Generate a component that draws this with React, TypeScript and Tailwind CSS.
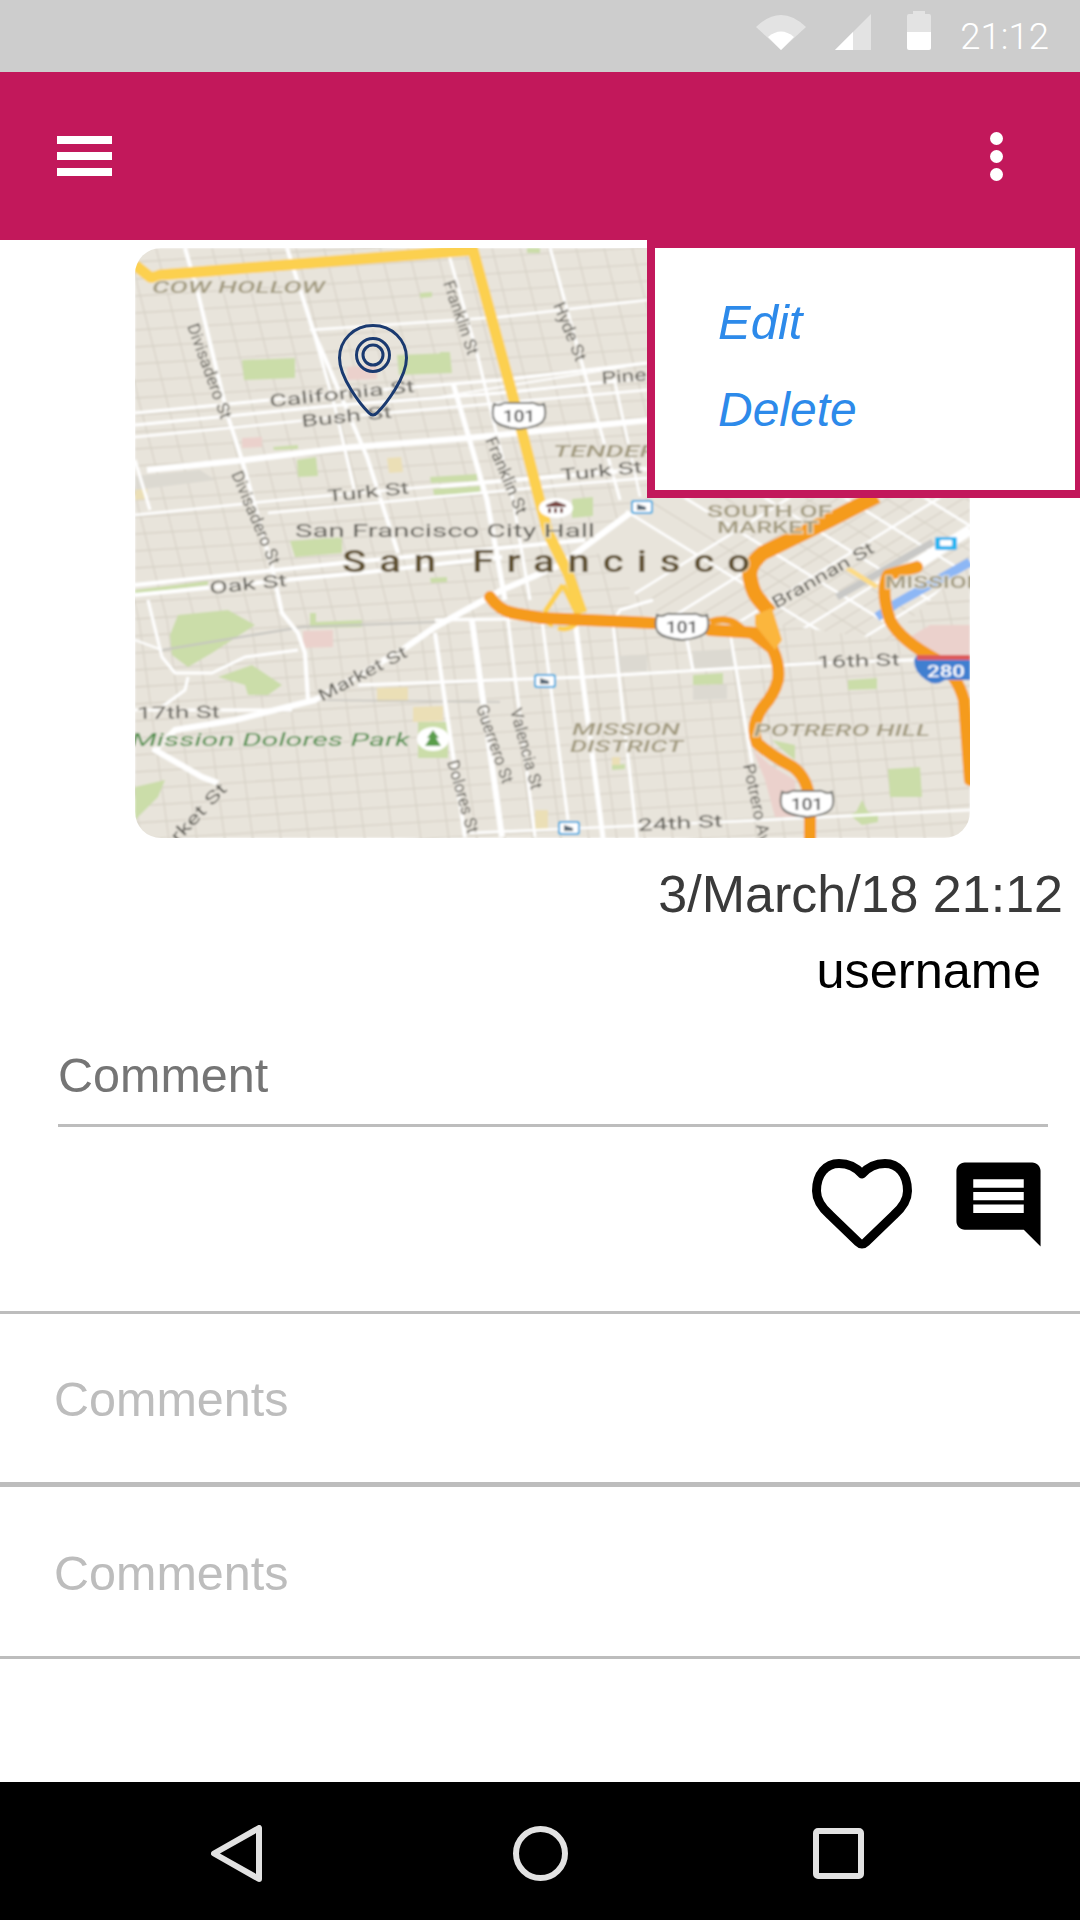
import React from "react";

const W = (pts: string, w: number, c = "#ffffff") => ({ pts, w, c });

const streets = [
  W("287,248 313,330 367,457 398,553", 4),
  W("313,330 335,407 355,493", 3),
  W("185,248 197,290 228,417 242,460 272,567 282,613 298,633 305,653 308,700", 4),
  W("135,413 340,393 500,380 647,363", 3),
  W("135,425 340,405 500,393 647,378", 3),
  W("135,437 340,417 500,403 647,390", 2.5),
  W("310,330 500,317 647,300", 2.5),
  W("147,470 245,460 342,448 468,438 518,433 650,420", 6),
  W("135,515 300,498 585,473 647,468", 2.5),
  W("268,513 585,483 647,478", 2.5),
  W("135,585 342,563 585,540", 4),
  W("135,595 368,572 502,557", 4),
  W("135,460 150,510", 3),
  W("135,640 162,650", 2),
  W("148,600 162,657 175,673 212,673 245,657 298,650", 3),
  W("188,677 185,690 162,707", 3),
  W("135,710 292,710", 3),
  W("358,685 585,677 817,663 913,660 970,657", 3),
  W("468,833 585,828 763,820 970,810", 2.5),
  W("435,620 585,618 700,618", 3),
  W("435,633 465,837", 4),
  W("472,620 502,837", 6),
  W("508,620 535,837", 3),
  W("542,620 568,820", 3),
  W("575,620 603,838", 5),
  W("613,623 637,838", 3),
  W("653,600 620,610 613,623", 3),
  W("687,640 693,670", 3),
  W("730,633 752,763", 3),
  W("447,248 477,353 490,407 513,500 530,600", 3),
  W("453,383 487,500 505,600", 5),
  W("550,248 620,500", 3),
  W("613,373 640,497", 2.5),
  W("440,397 647,363", 2),
  W("440,440 647,420", 3),
  W("440,487 647,470", 2),
  W("630,513 560,565 502,590 435,627 402,650 315,700 235,720 175,730 155,750 202,777 218,783", 6),
  W("970,530 920,563", 10),
];

const somaMajorA = [0, 75, 150, 225, 300, 375];
const somaMajorB = [0, 80, 160, 240, 320, 400];
const somaMinorA = [25, 50, 100, 125, 175, 200, 250, 275, 325, 350];
const somaMinorB = [40, 120, 200, 280, 360];

const hLines: number[] = [];
for (let y = 250; y < 900; y += 17) hLines.push(y);
const vLines: number[] = [];
for (let x = -40; x < 1000; x += 28) vLines.push(x);

const parks: string[] = [
  "242,360 295,358 295,378 244,380",
  "397,355 450,353 452,373 399,375",
  "420,293 432,292 432,297 420,298",
  "297,460 316,457 318,476 298,477",
  "430,477 477,474 477,481 431,483",
  "433,489 480,486 480,493 434,495",
  "290,541 342,537 342,553 295,557",
  "273,447 298,445 298,449 274,450",
  "572,499 593,497 593,516 572,518",
  "178,615 228,610 255,625 212,653 188,667 172,655 170,635",
  "218,677 252,665 282,685 268,695 248,695 245,685",
  "135,787 165,780 158,797 138,817 135,820",
  "310,613 316,613 316,622 362,620 362,627 310,628",
  "430,578 447,577 447,582 431,583",
  "418,722 448,722 448,758 418,758",
  "693,675 723,673 723,684 693,685",
  "848,680 877,678 877,689 848,690",
  "888,769 920,767 922,797 890,797",
  "856,812 862,800 868,812 878,815 878,822 862,825 850,815",
  "612,765 625,764 625,769 612,770",
  "772,740 795,745 795,760 785,752",
  "440,352 450,352 450,372 440,372",
  "527,248 540,248 540,253 527,253",
  "135,590 208,581 208,585 135,594",
];
const pinks: string[] = [
  "242,438 262,437 262,447 242,448",
  "168,473 198,472 198,477 168,477",
  "303,631 333,630 333,647 303,648",
  "753,750 770,765 795,780 797,817 775,817 765,780",
  "347,367 377,365 377,379 347,380",
  "905,640 930,625 970,625 970,655 940,655",
];
const tans: string[] = [
  "387,458 401,457 403,472 389,473",
  "377,688 408,687 408,701 377,702",
  "413,707 443,706 443,721 413,722",
  "135,488 147,487 147,499 135,500",
  "612,757 620,757 620,765 612,765",
  "535,810 548,810 548,830 535,830",
];
const grays: string[] = [
  "618,656 647,655 647,671 618,672",
  "693,651 733,650 733,667 693,668",
  "693,686 727,685 727,699 693,700",
  "135,476 200,470 215,480 135,490",
];

function Lbl(p: { x: number; y: number; w: number; s: number; t: string; r?: number; c?: string; i?: boolean; b?: boolean; ls?: number }) {
  return (
    <text
      x={p.x}
      y={p.y}
      textLength={p.w}
      lengthAdjust="spacingAndGlyphs"
      letterSpacing={p.ls}
      transform={p.r ? `rotate(${p.r} ${p.x} ${p.y})` : undefined}
      fontFamily="Roboto, 'Liberation Sans', sans-serif"
      fontSize={p.s}
      fontStyle={p.i ? "italic" : "normal"}
      fontWeight={p.b ? 500 : 400}
      fill={p.c ?? "#5f5d56"}
      stroke="#e8e4db"
      strokeOpacity={0.7}
      strokeWidth={2.5}
      paintOrder="stroke"
    >
      {p.t}
    </text>
  );
}

const NB = "#a39b80";

function Shield({ cx, cy }: { cx: number; cy: number }) {
  return (
    <g>
      <path
        d={`M${cx - 25} ${cy - 12} q4 2 8 0 q3 -2 6 -1 h22 q3 -1 6 1 q4 2 8 0 q3 12 -1 17 q-5 6 -24 8 q-19 -2 -24 -8 q-4 -5 -1 -17z`}
        fill="#ffffff"
        stroke="#6f6f6b"
        strokeWidth={2}
      />
      <text x={cx} y={cy + 6} textAnchor="middle" textLength={32} lengthAdjust="spacingAndGlyphs" fontFamily="Roboto, sans-serif" fontWeight={500} fontSize={17} fill="#3c3c3c">
        101
      </text>
    </g>
  );
}

function Transit({ x, y }: { x: number; y: number }) {
  return (
    <g>
      <rect x={x} y={y} width={20} height={12} rx={2} fill="#ffffff" stroke="#29a8e0" strokeWidth={2} />
      <path d={`M${x + 5} ${y + 3} l9 3 v3 h-9z`} fill="#5a6a78" />
    </g>
  );
}

function MapArt() {
  return (
    <svg viewBox="135 248 835 590" width={835} height={590} className="block">
      <defs>
        <filter id="mb" x="-2%" y="-2%" width="104%" height="104%">
          <feGaussianBlur stdDeviation="0.8" />
        </filter>
        <clipPath id="soma">
          <polygon points="590,545 640,498 970,498 970,560 890,640 760,622 690,618 650,610" />
        </clipPath>
      </defs>
      <g filter="url(#mb)">
        <rect x={135} y={248} width={835} height={590} fill="#e8e4db" />
        <g stroke="#d8d3c8" strokeWidth={1.3} fill="none">
          {hLines.map((y) => (
            <line key={y} x1={135} y1={y + 12} x2={970} y2={y - 40} />
          ))}
          {vLines.map((x) => (
            <polyline key={x} points={`${x},248 ${x + 95},620 ${x + 125},840`} />
          ))}
        </g>
        <polygon points="590,545 640,498 970,498 970,560 890,640 760,622 690,618 650,610" fill="#e8e4db" />
        <g clipPath="url(#soma)" fill="none">
          {somaMinorA.map((o) => (
            <line key={o} x1={560 + o} y1={640} x2={860 + o} y2={454} stroke="#d8d3c8" strokeWidth={1.3} />
          ))}
          {somaMinorB.map((o) => (
            <line key={o} x1={560 + o} y1={470} x2={860 + o} y2={656} stroke="#d8d3c8" strokeWidth={1.3} />
          ))}
          {somaMajorA.map((o) => (
            <line key={o} x1={560 + o} y1={640} x2={860 + o} y2={454} stroke="#ffffff" strokeWidth={2.5} />
          ))}
          {somaMajorB.map((o) => (
            <line key={o} x1={560 + o} y1={470} x2={860 + o} y2={656} stroke="#ffffff" strokeWidth={2.5} />
          ))}
        </g>
        {parks.map((p) => (
          <polygon key={p} points={p} fill="#cbdda9" />
        ))}
        {pinks.map((p) => (
          <polygon key={p} points={p} fill="#ebd1cc" />
        ))}
        {tans.map((p) => (
          <polygon key={p} points={p} fill="#ebdfb6" />
        ))}
        {grays.map((p) => (
          <polygon key={p} points={p} fill="#dcd9d1" />
        ))}
        <polyline points="162,650 302,627 435,622" fill="none" stroke="#c6c5c0" strokeWidth={2} />
        <polyline points="315,700 500,702" fill="none" stroke="#c6c5c0" strokeWidth={1.5} />
        <polyline points="933,542 837,597" fill="none" stroke="#c8c8c6" strokeWidth={7} />
        <polyline points="970,562 897,603 877,617" fill="none" stroke="#8db7f5" strokeWidth={9} />
        {streets.map((s) => (
          <polyline key={s.pts} points={s.pts} fill="none" stroke={s.c} strokeWidth={s.w} strokeLinejoin="round" />
        ))}
        <path d="M135 265 L150 277 Q155 278 160 275 L473 250 L513 397 L548 533 L568 573 L582 613" fill="none" stroke="#fcd04f" strokeWidth={11} strokeLinejoin="round" />
        <path d="M563 585 L546 610 Q543 622 553 625 M563 585 L580 620 Q570 632 558 628" fill="none" stroke="#fcd04f" strokeWidth={5} />
        <polyline points="847,568 877,587" fill="none" stroke="#fddb85" strokeWidth={5} />
        <path d="M490 597 Q500 612 518 614 L542 618 L653 623 M710 630 L757 633 Q770 640 773 650 Q780 665 778 680 Q774 695 763 707 Q750 725 757 743 Q770 755 793 767 Q808 778 810 803 L810 838" fill="none" stroke="#f59b1f" strokeWidth={12} strokeLinecap="round" strokeLinejoin="round" />
        <path d="M710 622 Q725 617 735 623 L770 650" fill="none" stroke="#f59b1f" strokeWidth={7} />
        <path d="M877 496 L830 520 L763 553 Q748 565 750 577 Q752 590 757 597 L770 613" fill="none" stroke="#f59b1f" strokeWidth={15} strokeLinejoin="round" />
        <polygon points="755,615 772,608 782,640 775,650 755,625" fill="#fbb63e" />
        <path d="M917 567 L888 575 Q880 590 890 620 Q900 640 937 660 Q957 675 964 700 L970 780" fill="none" stroke="#f59b1f" strokeWidth={12} strokeLinecap="round" strokeLinejoin="round" />
        <path d="M914 660 L917 655 H970 V680 H945 Q935 687 926 680 Q914 672 914 660z" fill="#3f7fd0" />
        <rect x={917} y={655} width={53} height={5} fill="#dd5a5a" />
        <text x={927} y={677} textLength={38} lengthAdjust="spacingAndGlyphs" fontFamily="Roboto, sans-serif" fontWeight={500} fontSize={17} fill="#ffffff">280</text>
        <Shield cx={519} cy={416} />
        <Shield cx={682} cy={627} />
        <Shield cx={807} cy={804} />
        <Transit x={632} y={501} />
        <Transit x={535} y={675} />
        <Transit x={559} y={822} />
        <rect x={935} y={537} width={22} height={13} rx={2} fill="#29b6f0" />
        <rect x={940} y={540} width={12} height={6} rx={1} fill="#ffffff" />
        <ellipse cx={556} cy={508} rx={17} ry={10} fill="#ffffff" />
        <path d="M546 505 L556 501 L566 505 V507 H546z M548 508 h3 v5 h-3z M554 508 h3 v5 h-3z M560 508 h3 v5 h-3z" fill="#7a4a44" />
        <ellipse cx={433} cy={739} rx={16} ry={12} fill="#ffffff" />
        <path d="M433 730 L439 738 H436 L441 746 H425 L430 738 H427z" fill="#5a9e4b" />

        <Lbl x={152} y={293} w={173} s={17} t="COW HOLLOW" i b c={NB} />
        <Lbl x={187} y={326} w={100} s={17} r={70} t="Divisadero St" />
        <Lbl x={443} y={283} w={77} s={17} r={71} t="Franklin St" />
        <Lbl x={270} y={407} w={146} s={17} r={-6} t="California St" />
        <Lbl x={302} y={427} w={91} s={17} r={-6} t="Bush St" />
        <Lbl x={553} y={305} w={62} s={17} r={68} t="Hyde St" />
        <Lbl x={602} y={384} w={72} s={17} r={-5} t="Pine St" />
        <Lbl x={485} y={440} w={82} s={17} r={67} t="Franklin St" />
        <Lbl x={553} y={457} w={165} s={17} i b t="TENDERLOIN" c={NB} />
        <Lbl x={561} y={481} w={82} s={17} r={-6} t="Turk St" />
        <Lbl x={328} y={502} w={82} s={17} r={-6} t="Turk St" />
        <Lbl x={295} y={537} w={300} s={18} t="San Francisco City Hall" />
        <Lbl x={342} y={572} w={421} s={31} b ls={10} t="San Francisco" c="#5f4f2f" />
        <Lbl x={210} y={594} w={78} s={17} r={-6} t="Oak St" />
        <Lbl x={231} y={474} w={100} s={17} r={67} t="Divisadero St" />
        <Lbl x={322} y={702} w={98} s={17} r={-28} t="Market St" />
        <Lbl x={137} y={719} w={83} s={17} r={-1} t="17th St" />
        <Lbl x={131} y={746} w={279} s={18} i t="Mission Dolores Park" c="#4d8f48" />
        <Lbl x={153} y={870} w={110} s={17} r={-47} t="Market St" />
        <Lbl x={476} y={707} w={82} s={17} r={71} t="Guerrero St" />
        <Lbl x={510} y={710} w={83} s={17} r={75} t="Valencia St" />
        <Lbl x={447} y={762} w={75} s={17} r={74} t="Dolores St" />
        <Lbl x={743} y={765} w={90} s={17} r={78} t="Potrero Ave" />
        <Lbl x={572} y={735} w={108} s={17} i b t="MISSION" c={NB} />
        <Lbl x={570} y={752} w={113} s={17} i b t="DISTRICT" c={NB} />
        <Lbl x={754} y={736} w={176} s={17} i b t="POTRERO HILL" c={NB} />
        <Lbl x={817} y={668} w={83} s={17} r={-2} t="16th St" />
        <Lbl x={638} y={831} w={85} s={17} r={-3} t="24th St" />
        <Lbl x={707} y={517} w={125} s={17} b t="SOUTH OF" c={NB} />
        <Lbl x={717} y={533} w={101} s={17} b t="MARKET" c={NB} />
        <Lbl x={776} y={609} w={115} s={17} r={-30} t="Brannan St" />
        <Lbl x={885} y={588} w={150} s={17} b t="MISSION BAY" c={NB} />
      </g>
      <path d="M373 325.5 C392 325.5 406.5 340 406.5 358 C406.5 378 385 405 377 413 Q373 417 369 413 C361 405 339.5 378 339.5 358 C339.5 340 354 325.5 373 325.5Z" fill="none" stroke="#1a3a70" strokeWidth={3} />
      <circle cx={373} cy={355} r={16.5} fill="none" stroke="#1a3a70" strokeWidth={3} />
      <circle cx={373} cy={355} r={10} fill="none" stroke="#1a3a70" strokeWidth={3} />
    </svg>
  );
}

export default function App() {
  return (
    <div className="relative flex h-[1920px] w-[1080px] flex-col overflow-hidden bg-white font-['Liberation_Sans',Arial,sans-serif]">
      {/* status bar */}
      <div className="flex h-[72px] shrink-0 items-end justify-end bg-[#cdcdcd] pb-[22px] pr-[31px]">
        <svg width={50} height={35} viewBox="755 15 50 35" className="mr-[29px]">
          <path d="M780 50 L755 27 Q780 3 805 27z" fill="#e3e3e3" />
          <path d="M780 50 L767 37 Q780 26 793 37z" fill="#ffffff" />
        </svg>
        <svg width={36} height={36} viewBox="834 14 36 36" className="mr-[36px]">
          <path d="M834 50 L870 14 V50z" fill="#e3e3e3" />
          <path d="M834 50 L852 32 V50z" fill="#ffffff" />
        </svg>
        <svg width={24} height={39} viewBox="906 11 24 39" className="mr-[29px]">
          <path d="M912 11 H924 V14 H928 Q930 14 930 16 V32 H906 V16 Q906 14 908 14 H912z" fill="#e3e3e3" />
          <path d="M906 32 H930 V48 Q930 50 928 50 H908 Q906 50 906 48z" fill="#ffffff" />
        </svg>
        <div className="-mb-[5px] font-['Roboto',sans-serif] text-[36.5px] font-light leading-[36px] text-white">21:12</div>
      </div>

      {/* app bar */}
      <div className="flex h-[168px] shrink-0 items-center justify-between bg-[#c2185b] pl-[57px] pr-[77px]">
        <div className="flex w-[55px] flex-col gap-[8px]">
          <div className="h-[8px] bg-white" />
          <div className="h-[8px] bg-white" />
          <div className="h-[8px] bg-white" />
        </div>
        <div className="flex flex-col gap-[5px]">
          <div className="h-[13px] w-[13px] rounded-full bg-white" />
          <div className="h-[13px] w-[13px] rounded-full bg-white" />
          <div className="h-[13px] w-[13px] rounded-full bg-white" />
        </div>
      </div>

      {/* map */}
      <div className="ml-[135px] mt-[8px] h-[590px] w-[835px] shrink-0 overflow-hidden rounded-[26px]">
        <MapArt />
      </div>

      {/* meta */}
      <div className="mt-[26px] pr-[17px] text-right text-[52px] leading-[60px] text-[#3a3a3a]">3/March/18 21:12</div>
      <div className="mt-[17px] pr-[39px] text-right text-[50.5px] leading-[60px] text-black">username</div>

      {/* comment input */}
      <div className="ml-[58px] mt-[44px] w-[990px] border-b-[3px] border-[#bdbdbd] pb-[19px]">
        <div className="text-[48.5px] leading-[60px] text-[#757575]">Comment</div>
      </div>

      {/* actions */}
      <div className="mt-[27px] flex items-center justify-end gap-[36px] pr-[31px]">
        <svg width={100} height={91} viewBox="812 1158 100 91">
          <path
            d="M862 1173 C855 1165 847 1162.5 839 1162.5 C826 1162.5 816.5 1173 816.5 1190 C816.5 1200 822 1207 830 1214 L858 1241 Q862 1245 866 1241 L894 1214 C902 1207 907.5 1200 907.5 1190 C907.5 1173 898 1162.5 885 1162.5 C877 1162.5 869 1165 862 1173 Z"
            fill="none"
            stroke="#000000"
            strokeWidth={9}
            strokeLinejoin="round"
          />
        </svg>
        <svg width={101} height={101} viewBox="0 0 24 24">
          <path
            d="M21.99 4c0-1.1-.89-2-1.99-2H4c-1.1 0-2 .9-2 2v12c0 1.1.9 2 2 2h14l4 4-.01-18zM18 14H6v-2h12v2zm0-3H6V9h12v2zm0-3H6V6h12v2z"
            fill="#000000"
          />
        </svg>
      </div>

      {/* comments */}
      <div className="mt-[56px] h-[171px] border-t-[3px] border-[#bdbdbd] pl-[54px] pt-[55px]">
        <div className="text-[48.5px] leading-[60px] text-[#bdbdbd]">Comments</div>
      </div>
      <div className="h-[177px] border-y-[3px] border-t-[5px] border-[#bdbdbd] pl-[54px] pt-[56px]">
        <div className="text-[48.5px] leading-[60px] text-[#bdbdbd]">Comments</div>
      </div>

      <div className="flex-1" />

      {/* nav bar */}
      <div className="flex h-[138px] shrink-0 items-center bg-black pl-[211px] pt-[5px]">
        <svg width={52} height={57} viewBox="0 0 52 57" className="mr-[250px]">
          <path d="M3 28.5 L48 3 V54z" fill="none" stroke="#e2e2e2" strokeWidth={6} strokeLinejoin="round" />
        </svg>
        <svg width={55} height={55} viewBox="0 0 55 55" className="mr-[245px]">
          <circle cx={27.5} cy={27.5} r={24.5} fill="none" stroke="#e2e2e2" strokeWidth={6} />
        </svg>
        <svg width={51} height={51} viewBox="0 0 51 51">
          <rect x={3} y={3} width={45} height={45} rx={2} fill="none" stroke="#e2e2e2" strokeWidth={6} />
        </svg>
      </div>

      {/* overflow menu */}
      <div className="absolute left-[647px] top-[240px] h-[258px] w-[433px] border-[8px] border-r-[5px] border-[#c2185b] bg-white pl-[63px] pt-[31px] italic leading-[87px] text-[#2d8aea]">
        <div className="text-[49px]">Edit</div>
        <div className="text-[48px]">Delete</div>
      </div>
    </div>
  );
}
